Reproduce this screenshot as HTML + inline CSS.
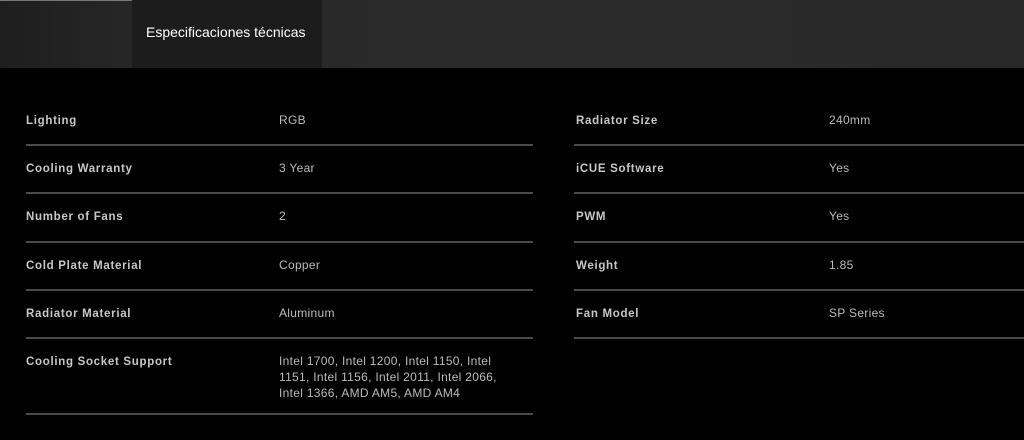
<!DOCTYPE html>
<html><head><meta charset="utf-8"><style>
*{margin:0;padding:0;box-sizing:border-box}
body{width:1024px;height:440px;background:#000;font-family:"Liberation Sans",sans-serif;position:relative;overflow:hidden}
.hdr{position:absolute;left:0;top:0;width:1024px;height:68px;background:linear-gradient(90deg,#1e1e1e 0%,#262626 12%,#2a2a2a 40%,#292929 100%)}
.topl{position:absolute;left:0;top:0;width:132px;height:1px;background:#777}
.tab{position:absolute;left:132px;top:0;width:190px;height:68px;background:#1c1c1c;color:#fff;font-size:14px;line-height:64px;padding-left:14px}
.l{position:absolute;font-size:11.5px;font-weight:bold;color:#c8c8c8;letter-spacing:0.7px;margin-top:3px}
.v{position:absolute;font-size:12px;color:#bbb;line-height:16px;letter-spacing:0.3px;margin-top:1px}
.hr{position:absolute;height:2px;background:#4a4a4a}
</style></head><body>
<div class="hdr"></div><div class="topl"></div>
<div class="tab">Especificaciones técnicas</div>

<div class="l" style="left:26px;top:112px">Lighting</div><div class="v" style="left:279px;top:111px">RGB</div>
<div class="hr" style="left:26px;top:144px;width:507px"></div>
<div class="l" style="left:26px;top:160px">Cooling Warranty</div><div class="v" style="left:279px;top:159px">3 Year</div>
<div class="hr" style="left:26px;top:192px;width:507px"></div>
<div class="l" style="left:26px;top:208px">Number of Fans</div><div class="v" style="left:279px;top:207px">2</div>
<div class="hr" style="left:26px;top:241px;width:507px"></div>
<div class="l" style="left:26px;top:257px">Cold Plate Material</div><div class="v" style="left:279px;top:256px">Copper</div>
<div class="hr" style="left:26px;top:289px;width:507px"></div>
<div class="l" style="left:26px;top:305px">Radiator Material</div><div class="v" style="left:279px;top:304px">Aluminum</div>
<div class="hr" style="left:26px;top:337px;width:507px"></div>
<div class="l" style="left:26px;top:353px">Cooling Socket Support</div><div class="v" style="left:279px;top:352px;width:228px">Intel 1700, Intel 1200, Intel 1150, Intel 1151, Intel 1156, Intel 2011, Intel 2066, Intel 1366, AMD AM5, AMD AM4</div>
<div class="hr" style="left:26px;top:413px;width:507px"></div>

<div class="l" style="left:576px;top:112px">Radiator Size</div><div class="v" style="left:829px;top:111px">240mm</div>
<div class="hr" style="left:574px;top:144px;width:450px"></div>
<div class="l" style="left:576px;top:160px">iCUE Software</div><div class="v" style="left:829px;top:159px">Yes</div>
<div class="hr" style="left:574px;top:192px;width:450px"></div>
<div class="l" style="left:576px;top:208px">PWM</div><div class="v" style="left:829px;top:207px">Yes</div>
<div class="hr" style="left:574px;top:241px;width:450px"></div>
<div class="l" style="left:576px;top:257px">Weight</div><div class="v" style="left:829px;top:256px">1.85</div>
<div class="hr" style="left:574px;top:289px;width:450px"></div>
<div class="l" style="left:576px;top:305px">Fan Model</div><div class="v" style="left:829px;top:304px">SP Series</div>
<div class="hr" style="left:574px;top:337px;width:450px"></div>
</body></html>
